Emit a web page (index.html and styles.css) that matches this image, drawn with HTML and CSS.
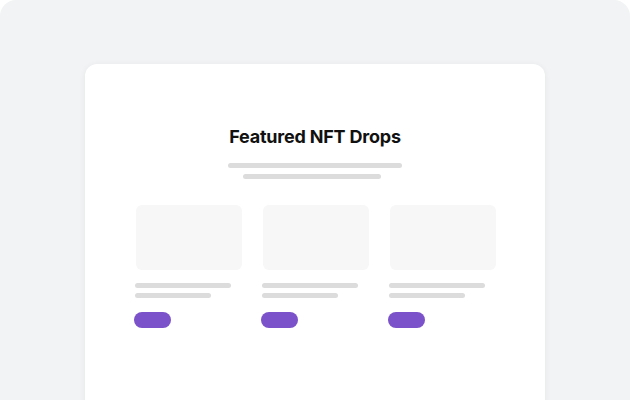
FILE: index.html
```html
<!DOCTYPE html>
<html>
<head>
    <meta charset="UTF-8">
    <title>Featured NFT Drops</title>
    <link rel="stylesheet" href="styles.css">
</head>
<body>
    <div class="frame">
        <div class="card">
            <h1 class="title">Featured NFT Drops</h1>
            <div class="subtitle">
                <span class="line line-long"></span>
                <span class="line line-short"></span>
            </div>
            <div class="drops">
                <div class="drop">
                    <div class="drop-image"></div>
                    <span class="bar bar-name"></span>
                    <span class="bar bar-price"></span>
                    <span class="pill"></span>
                </div>
                <div class="drop">
                    <div class="drop-image"></div>
                    <span class="bar bar-name"></span>
                    <span class="bar bar-price"></span>
                    <span class="pill"></span>
                </div>
                <div class="drop">
                    <div class="drop-image"></div>
                    <span class="bar bar-name"></span>
                    <span class="bar bar-price"></span>
                    <span class="pill"></span>
                </div>
            </div>
        </div>
    </div>
</body>
</html>
```

FILE: styles.css
```css
body {
    margin: 0;
    background-color: #fff;
    font-family: Inter, "Noto Sans", sans-serif;
}
.frame {
    height: 400px;
    background-color: #f2f3f5;
    border-radius: 16px 16px 0 0;
    overflow: hidden;
    display: flex;
    justify-content: center;
    padding-top: 64px;
    box-sizing: border-box;
}
.card {
    width: 460px;
    height: 360px;
    background-color: #fff;
    border-radius: 12px;
    box-shadow: 0 1px 6px rgba(0, 0, 0, 0.06);
    display: flex;
    flex-direction: column;
    align-items: center;
    padding-top: 61px;
    box-sizing: border-box;
}
.title {
    margin: 0;
    font-size: 18px;
    line-height: 24px;
    font-weight: 700;
    color: #111;
    letter-spacing: -0.2px;
}
.subtitle {
    display: flex;
    flex-direction: column;
    align-items: center;
    gap: 6px;
    margin-top: 14px;
}
.line {
    display: block;
    height: 5px;
    border-radius: 3px;
    background-color: #dcdcdc;
}
.line-long {
    width: 174px;
}
.line-short {
    width: 138px;
    margin-right: 6px;
}
.drops {
    display: grid;
    grid-template-columns: repeat(3, 106px);
    column-gap: 21px;
    margin-top: 26px;
}
.drop {
    display: flex;
    flex-direction: column;
    align-items: flex-start;
}
.drop-image {
    width: 106px;
    height: 65px;
    margin-left: 1px;
    border-radius: 6px;
    background-color: #f7f7f7;
}
.bar {
    display: block;
    height: 5px;
    border-radius: 3px;
    background-color: #dcdcdc;
}
.bar-name {
    width: 96px;
    margin-top: 13px;
}
.bar-price {
    width: 76px;
    margin-top: 5px;
}
.pill {
    display: block;
    width: 37px;
    height: 16px;
    margin-top: 14px;
    margin-left: -1px;
    border-radius: 8px;
    background-color: #7b52c9;
}
```
